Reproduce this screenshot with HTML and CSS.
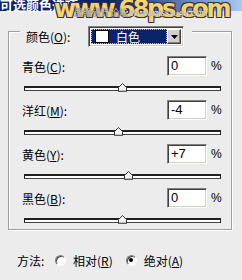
FILE: index.html
```html
<!DOCTYPE html>
<html lang="zh-CN">
<head>
    <meta charset="UTF-8">
    <meta name="viewport" content="width=device-width, initial-scale=1.0">
    <title>可选颜色选项</title>
    <link rel="stylesheet" href="styles.css">
</head>
<body>
<div class="titlebar">
    <span class="title">可选颜色选项</span>
    <div class="watermark">
        <span class="wm-big">www.68ps.com</span>
        <span class="wm-small">思缘设计论坛 <span class="wm-url">WWW.MISSYUAN.COM</span></span>
    </div>
</div>
<div class="dialog">
    <div class="group">
        <div class="group-head">
            <span class="head-label">颜色(<u>O</u>):</span>
            <div class="select">
                <div class="select-value"><span class="swatch"></span>白色</div>
                <div class="select-btn">
                    <svg width="7" height="4" viewBox="0 0 7 4"><path d="M0 0H7L3.5 4Z" fill="#000"/></svg>
                </div>
            </div>
        </div>

        <div class="row">
            <span class="label">青色(<u>C</u>):</span>
            <span class="input">0</span>
            <span class="pct">%</span>
        </div>
        <div class="slider">
            <div class="track"></div>
            <svg class="thumb" style="left:50%" width="9" height="9" viewBox="0 0 9 9"><path d="M4.5 0.5L8.5 4.5V8.5H0.5V4.5Z" fill="#f4f4f4" stroke="#333"/><path d="M1 8H8" stroke="#888"/></svg>
        </div>

        <div class="row">
            <span class="label">洋红(<u>M</u>):</span>
            <span class="input">-4</span>
            <span class="pct">%</span>
        </div>
        <div class="slider">
            <div class="track"></div>
            <svg class="thumb" style="left:48%" width="9" height="9" viewBox="0 0 9 9"><path d="M4.5 0.5L8.5 4.5V8.5H0.5V4.5Z" fill="#f4f4f4" stroke="#333"/><path d="M1 8H8" stroke="#888"/></svg>
        </div>

        <div class="row">
            <span class="label">黄色(<u>Y</u>):</span>
            <span class="input">+7</span>
            <span class="pct">%</span>
        </div>
        <div class="slider">
            <div class="track"></div>
            <svg class="thumb" style="left:53.5%" width="9" height="9" viewBox="0 0 9 9"><path d="M4.5 0.5L8.5 4.5V8.5H0.5V4.5Z" fill="#f4f4f4" stroke="#333"/><path d="M1 8H8" stroke="#888"/></svg>
        </div>

        <div class="row">
            <span class="label">黑色(<u>B</u>):</span>
            <span class="input">0</span>
            <span class="pct">%</span>
        </div>
        <div class="slider">
            <div class="track"></div>
            <svg class="thumb" style="left:50%" width="9" height="9" viewBox="0 0 9 9"><path d="M4.5 0.5L8.5 4.5V8.5H0.5V4.5Z" fill="#f4f4f4" stroke="#333"/><path d="M1 8H8" stroke="#888"/></svg>
        </div>
    </div>

    <div class="method">
        <span class="method-label">方法:</span>
        <span class="radio"></span>
        <span class="radio-text">相对(<u>R</u>)</span>
        <span class="radio checked"></span>
        <span class="radio-text">绝对(<u>A</u>)</span>
    </div>
</div>
</body>
</html>
```

FILE: styles.css
```css
* {
    box-sizing: border-box;
    margin: 0;
    padding: 0;
}

body {
    width: 242px;
    height: 280px;
    overflow: hidden;
    background: #ececec;
    font-family: "Noto Sans CJK SC", "Liberation Sans", sans-serif;
    font-size: 12px;
    color: #000;
}

u {
    text-decoration: underline;
    text-underline-offset: 1px;
}

/* title bar with watermark */
.titlebar {
    position: relative;
    height: 13px;
    background: linear-gradient(90deg, #0a246a 0%, #0a246a 45%, #a6caf0 100%);
}

.title {
    display: block;
    color: #fff;
    font-weight: bold;
    font-size: 13px;
    line-height: 13px;
    margin-top: -2px;
    white-space: nowrap;
}

.watermark {
    position: absolute;
    left: 54px;
    top: 0;
    width: 186px;
    height: 24px;
    z-index: 2;
}

.wm-big {
    position: absolute;
    left: 0;
    top: -1px;
    font-family: "DejaVu Sans", sans-serif;
    font-weight: bold;
    font-size: 24px;
    line-height: 24px;
    letter-spacing: -2.4px;
    color: #f3d66a;
    text-shadow: 1px 1px 0 #3a2a5a, -1px -1px 0 #3a2a5a, 1px -1px 0 #3a2a5a, -1px 1px 0 #3a2a5a;
    white-space: nowrap;
}

.wm-small {
    position: absolute;
    left: 20px;
    top: 9px;
    font-size: 9px;
    line-height: 11px;
    color: #c8c8d8;
    text-shadow: 0 0 1px #222;
    white-space: nowrap;
}

.wm-url {
    font-family: "DejaVu Sans", sans-serif;
    font-size: 7px;
    color: #fff;
}

/* dialog body */
.dialog {
    padding: 20px 10px 0 8px;
}

.group {
    display: flex;
    flex-direction: column;
    width: 224px;
    border: 1px solid #a0a0a0;
    box-shadow: inset 1px 1px 0 #fff, 1px 1px 0 #fff;
    padding-bottom: 6px;
}

.group-head {
    align-self: flex-start;
    display: flex;
    align-items: center;
    margin: -6px 0 0 11px;
    padding: 0 8px 0 6px;
    background: #ececec;
    height: 21px;
}

.head-label {
    width: 62px;
}

.select {
    display: flex;
    width: 96px;
    height: 21px;
    border: 1px solid;
    border-color: #808080 #fff #fff #808080;
    box-shadow: inset 1px 1px 0 #404040, inset -1px -1px 0 #d4d0c8;
    background: #fff;
    padding: 2px;
}

.select-value {
    flex: 1;
    display: flex;
    align-items: center;
    background: #0a246a;
    color: #fff;
    outline: 1px dotted #c8c8a0;
    outline-offset: -1px;
    padding-left: 4px;
    font-size: 12px;
}

.swatch {
    width: 14px;
    height: 13px;
    background: #fff;
    border: 1px solid #000;
    margin-right: 7px;
}

.select-btn {
    width: 14px;
    display: flex;
    align-items: center;
    justify-content: center;
    background: #d4d0c8;
    border: 1px solid;
    border-color: #fff #404040 #404040 #fff;
    box-shadow: inset -1px -1px 0 #808080;
}

.row {
    display: flex;
    align-items: center;
    height: 20px;
    margin-top: 9px;
    padding: 0 9px 0 13px;
}

.label {
    flex: 1;
}

.input {
    width: 40px;
    height: 20px;
    background: #fff;
    border: 1px solid;
    border-color: #808080 #fff #fff #808080;
    box-shadow: inset 1px 1px 0 #404040, inset -1px -1px 0 #d4d0c8;
    padding: 1px 0 0 3px;
    font-family: "Liberation Sans", sans-serif;
    font-size: 13px;
    line-height: 16px;
}

.pct {
    width: 11px;
    margin-left: 4px;
    font-family: "Liberation Sans", sans-serif;
    font-size: 12px;
}

.slider {
    position: relative;
    height: 5px;
    margin: 10px 10px 0 15px;
}

.track {
    height: 5px;
    background: #fff;
    border: 1px solid #202020;
    border-top-width: 2px;
    border-bottom-color: #404040;
}

.thumb {
    position: absolute;
    top: -3px;
    margin-left: -5px;
}

.method {
    display: flex;
    align-items: center;
    height: 16px;
    margin-top: 22px;
    padding-left: 9px;
}

.method-label {
    width: 38px;
}

.radio {
    width: 11px;
    height: 11px;
    border-radius: 50%;
    background: #fff;
    border: 1px solid;
    border-color: #808080 #fff #fff #808080;
    box-shadow: inset 1px 1px 0 #404040;
    display: flex;
    align-items: center;
    justify-content: center;
    margin-right: 7px;
}

.radio.checked::after {
    content: "";
    width: 4px;
    height: 4px;
    border-radius: 50%;
    background: #000;
}

.radio-text {
    margin-right: 13px;
}
```
